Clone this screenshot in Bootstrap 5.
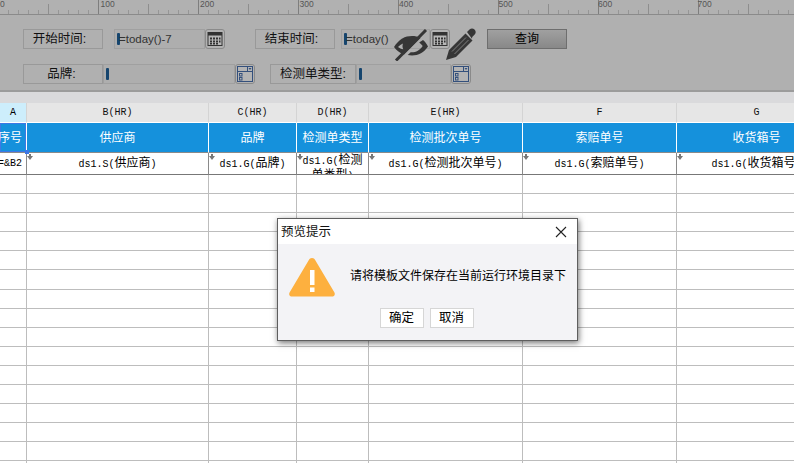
<!DOCTYPE html>
<html lang="zh-CN">
<head>
<meta charset="utf-8">
<title>预览提示</title>
<link rel="stylesheet" href="https://cdn.jsdelivr.net/npm/bootstrap@5.3.0/dist/css/bootstrap.min.css">
<style>
html,body{height:100%;overflow:hidden;background:#fff}
body{font-family:"Liberation Sans","Noto Sans CJK SC",sans-serif;font-size:12px;color:#000}
.stage{width:794px;height:463px;overflow:hidden;position:relative}
.ruler{height:15px;background-color:#b1b1b1;border-bottom:1px solid #8a8a8a;font-size:8.5px;color:#555;line-height:8px;
background-image:linear-gradient(90deg,#7e7e7e 1px,transparent 1px),linear-gradient(90deg,#8e8e8e 1px,transparent 1px),linear-gradient(90deg,#969696 1px,transparent 1px);
background-size:100px 14px,100px 10px,10px 4px;background-repeat:repeat-x;background-position:-2px 0,48px 4px,8px 10px}
.rtick{width:100px;padding-left:3px}
.rtick-first{width:98px;padding-left:0}
.toolpane{height:77px;background:#b0b0b0;border-bottom:2px solid #9c9c9c;padding:14px 0 0 23px}
.tool-row{height:20px;margin-bottom:15px}
.flabel{height:20px;border:1px solid #999;background:#b0b0b0;font-size:12.5px;color:#111;width:80px;line-height:19px;text-align:center}
.lbl-shift{padding-right:7px}
.lbl-shift-sm{padding-right:3px}
.fbox{height:20px;border:1px solid #a0a0a0;background:#aeaeae;color:#333;font-size:11.5px;line-height:18px;padding-left:2px;white-space:nowrap}
.caret-mark{display:inline-block;width:3px;height:12px;background:#16456e;border-radius:1px;vertical-align:-2px;margin-right:-1px}
.pick{width:20px;height:20px;border:1px solid #8a8a8a;border-radius:3px;background:#b2b2b2;flex:none;padding:1px}
.pick svg{display:block}
.w-start{width:91px;margin-left:11px}
.w-end{width:89px;margin-left:6px}
.w-brand{width:132px}
.w-type{width:95px}
.gap-end{margin-left:30px}
.gap-type{margin-left:15px;width:86px}
.query{width:80px;height:20px;border:1px solid #6e6e6e;border-radius:0;background:linear-gradient(#a0a0a0,#888);font-size:12px;padding:0;line-height:18px;margin-left:37px;color:#000}
.eye{position:absolute;left:393px;top:29px}
.pencil{position:absolute;left:445px;top:28px}
.band{height:11px;background:#dadadc}
.sheet{width:837px;table-layout:fixed;border-collapse:separate;border-spacing:0;margin:0;font-family:"Liberation Mono","Noto Sans CJK SC",monospace}
.sheet td,.sheet th{padding:0;border-right:1px solid #bdbdbd;border-bottom:1px solid #bdbdbd;background:#fff;box-shadow:none;height:19.1px;font-weight:400;text-align:center;color:#000;overflow:hidden;white-space:nowrap;position:relative;vertical-align:middle}
.sheet .head th{background:#e6e6e6;height:20px;font-size:10px;line-height:19px;border-right:1px solid #d4d4d4;border-bottom:1px solid #fff;color:#111}
.sheet .head .on{background:#cdeefc;color:#000}
.sheet .title th{background:#1591dc;height:30px;color:#fff;font-family:"Liberation Sans","Noto Sans CJK SC",sans-serif;font-size:12px;border-right:1px solid #fff;border-bottom:1px solid #8a8a8a}
.sheet .title .seq{box-shadow:inset 0 0 0 1px #3c78e6;padding-right:4px}
.clip-r{display:block;width:40px;margin-left:-18px;text-align:right}
.sheet .data td{height:22px;font-size:12px;line-height:14px;border-right:1px solid #8a8a8a;border-bottom:1px solid #777;padding-top:1px}
.lat{font-size:10px}
.sheet .data .wrapbox{padding-top:0;vertical-align:top}
.wrapcell{display:block;height:21px;overflow:hidden;white-space:normal;line-height:14px;padding-top:1px}
.mk{position:absolute;left:0;top:1px;display:block}
.handle{position:absolute;left:25px;top:150px;width:4px;height:4px;background:#3c78e6}
.dialog-box{position:absolute;left:277px;top:218px;width:301px;height:123px;background:#f3f3f6;border:1px solid #5e5e5e;box-shadow:1px 2px 6px rgba(0,0,0,.55);z-index:5}
.dlg-head{height:25px;background:#fff;font-size:12.5px;line-height:24px;padding-left:3px;color:#111}
.dlg-msg{font-size:12px;padding-left:10px;height:53px}
.warn{margin-top:11px;flex:none}
.dlg-text{margin-left:14px;margin-top:23px;line-height:18px;white-space:nowrap}
.dlg-btn{width:44px;height:20px;padding:0;border:1px solid #d6d6d6;border-radius:0;background:#fff;font-size:12.5px;line-height:18px;color:#000}
.dlg-foot{gap:6px;margin-top:11px;padding-right:2px}
.dlg-x{width:12px;height:12px;margin-right:10px;border:0;background:none;padding:0}
.dlg-x svg{display:block}
.c-a{width:27px}.c-b{width:182px}.c-c{width:88px}.c-d{width:72px}.c-e{width:154px}.c-f{width:154px}.c-g{width:160px}
</style>
</head>
<body>
<div class="stage">
  <div class="ruler d-flex">
    <span class="rtick rtick-first">0</span><span class="rtick">100</span><span class="rtick">200</span><span class="rtick">300</span><span class="rtick">400</span><span class="rtick">500</span><span class="rtick">600</span><span class="rtick">700</span>
  </div>
  <div class="toolpane">
    <div class="tool-row d-flex align-items-center">
      <div class="flabel lbl-shift">开始时间:</div>
      <div class="fbox w-start"><span class="caret-mark"></span>=today()-7</div>
      <div class="pick"><svg width="16" height="16" viewBox="0 0 16 16"><rect x="1" y="1.5" width="14" height="13" fill="#b8b8b8" stroke="#333"/><rect x="1" y="1.5" width="14" height="3" fill="#333"/><g fill="#333"><rect x="3" y="6.5" width="2" height="2"/><rect x="6" y="6.5" width="2" height="2"/><rect x="9" y="6.5" width="2" height="2"/><rect x="12" y="6.5" width="1.5" height="2"/><rect x="3" y="9.5" width="2" height="2"/><rect x="6" y="9.5" width="2" height="2"/><rect x="9" y="9.5" width="2" height="2"/><rect x="12" y="9.5" width="1.5" height="2"/><rect x="3" y="12" width="2" height="1.5"/><rect x="6" y="12" width="2" height="1.5"/><rect x="9" y="12" width="2" height="1.5"/></g></svg></div>
      <div class="flabel gap-end lbl-shift">结束时间:</div>
      <div class="fbox w-end"><span class="caret-mark"></span>=today()</div>
      <div class="pick"><svg width="16" height="16" viewBox="0 0 16 16"><rect x="1" y="1.5" width="14" height="13" fill="#b8b8b8" stroke="#333"/><rect x="1" y="1.5" width="14" height="3" fill="#333"/><g fill="#333"><rect x="3" y="6.5" width="2" height="2"/><rect x="6" y="6.5" width="2" height="2"/><rect x="9" y="6.5" width="2" height="2"/><rect x="12" y="6.5" width="1.5" height="2"/><rect x="3" y="9.5" width="2" height="2"/><rect x="6" y="9.5" width="2" height="2"/><rect x="9" y="9.5" width="2" height="2"/><rect x="12" y="9.5" width="1.5" height="2"/><rect x="3" y="12" width="2" height="1.5"/><rect x="6" y="12" width="2" height="1.5"/><rect x="9" y="12" width="2" height="1.5"/></g></svg></div>
      <button type="button" class="btn query">查询</button>
    </div>
    <div class="tool-row d-flex align-items-center">
      <div class="flabel lbl-shift-sm">品牌:</div>
      <div class="fbox w-brand"><span class="caret-mark"></span></div>
      <div class="pick"><svg width="16" height="16" viewBox="0 0 16 16"><rect x="0.5" y="0.5" width="15" height="15" fill="#b4b4b4" stroke="#34507c"/><path d="M.5 5.5h15M10.5.5v5" stroke="#34507c"/><path d="M11.5 2h3l-1.5 2z" fill="#34507c"/><rect x="2.5" y="7.5" width="2.5" height="2.5" fill="none" stroke="#34507c"/><rect x="2.5" y="11.500" width="2.5" height="2.5" fill="none" stroke="#34507c"/></svg></div>
      <div class="flabel gap-type">检测单类型:</div>
      <div class="fbox w-type"><span class="caret-mark"></span></div>
      <div class="pick"><svg width="16" height="16" viewBox="0 0 16 16"><rect x="0.5" y="0.5" width="15" height="15" fill="#b4b4b4" stroke="#34507c"/><path d="M.5 5.5h15M10.5.5v5" stroke="#34507c"/><path d="M11.5 2h3l-1.5 2z" fill="#34507c"/><rect x="2.5" y="7.5" width="2.5" height="2.5" fill="none" stroke="#34507c"/><rect x="2.5" y="11.500" width="2.5" height="2.5" fill="none" stroke="#34507c"/></svg></div>
    </div>
  </div>
  <svg class="eye" width="36" height="32" viewBox="0 0 36 32"><path d="M1 18C6 10 12 7 19 7c3 0 6 .6 8.500 2L11 25.500C7 24 3.500 21.500 1 18z" fill="#363636"/><path d="M30 11c2 1.500 3.500 3.500 5 6.500-4 6-9.500 9-16 9-1.500 0-3-.2-4.300-.5l3-2.800c4.500.4 9-1.500 12-6.200-1.200-1.600-2.400-2.700-3.500-3.600z" fill="#363636"/><path d="M3 31.500L33 1" stroke="#363636" stroke-width="3" fill="none"/><path d="M5 18c1.500-1.500 3-2.700 5-3.500-.8 2-.6 4 .3 5.800-2-.4-3.800-1-5.300-2.300z" fill="#b0b0b0"/></svg>
  <svg class="pencil" width="32" height="33" viewBox="0 0 32 33"><path d="M1 32l3-10L20.500 5.500l7 7L11 29z" fill="#363636"/><path d="M22 4l2.500-2.500c1.500-1.500 3.500-1.500 5 0s1.700 3.500.2 5L27.200 9l-.2 1.800z" fill="#363636"/><path d="M7 23.500L21 9.500M9.500 26L23.500 12" stroke="#b0b0b0" stroke-width="1" opacity=".6"/></svg>
  <div class="band"></div>
  <table class="table sheet">
    <colgroup><col class="c-a"><col class="c-b"><col class="c-c"><col class="c-d"><col class="c-e"><col class="c-f"><col class="c-g"></colgroup>
    <tbody>
    <tr class="head"><th class="on">A</th><th>B(HR)</th><th>C(HR)</th><th>D(HR)</th><th>E(HR)</th><th>F</th><th>G</th></tr>
    <tr class="title"><th class="seq"><span class="clip-r">序号</span></th><th>供应商</th><th>品牌</th><th>检测单类型</th><th>检测批次单号</th><th>索赔单号</th><th>收货箱号</th></tr>
    <tr class="data">
      <td><span class="clip-r lat">=&amp;B2</span></td>
      <td><svg class="mk" width="6" height="6"><path d="M2 0h2v2h2L3 6 0 2h2z" fill="#777"/></svg><span class="lat">ds1.S(</span>供应商<span class="lat">)</span></td>
      <td><svg class="mk" width="6" height="6"><path d="M2 0h2v2h2L3 6 0 2h2z" fill="#777"/></svg><span class="lat">ds1.G(</span>品牌<span class="lat">)</span></td>
      <td class="wrapbox"><svg class="mk" width="6" height="6"><path d="M2 0h2v2h2L3 6 0 2h2z" fill="#777"/></svg><span class="wrapcell"><span class="lat">ds1.G(</span>检测单类型<span class="lat">)</span></span></td>
      <td><svg class="mk" width="6" height="6"><path d="M2 0h2v2h2L3 6 0 2h2z" fill="#777"/></svg><span class="lat">ds1.G(</span>检测批次单号<span class="lat">)</span></td>
      <td><svg class="mk" width="6" height="6"><path d="M2 0h2v2h2L3 6 0 2h2z" fill="#777"/></svg><span class="lat">ds1.G(</span>索赔单号<span class="lat">)</span></td>
      <td><svg class="mk" width="6" height="6"><path d="M2 0h2v2h2L3 6 0 2h2z" fill="#777"/></svg><span class="lat">ds1.G(</span>收货箱号<span class="lat">)</span></td>
    </tr>
    <tr><td></td><td></td><td></td><td></td><td></td><td></td><td></td></tr>
    <tr><td></td><td></td><td></td><td></td><td></td><td></td><td></td></tr>
    <tr><td></td><td></td><td></td><td></td><td></td><td></td><td></td></tr>
    <tr><td></td><td></td><td></td><td></td><td></td><td></td><td></td></tr>
    <tr><td></td><td></td><td></td><td></td><td></td><td></td><td></td></tr>
    <tr><td></td><td></td><td></td><td></td><td></td><td></td><td></td></tr>
    <tr><td></td><td></td><td></td><td></td><td></td><td></td><td></td></tr>
    <tr><td></td><td></td><td></td><td></td><td></td><td></td><td></td></tr>
    <tr><td></td><td></td><td></td><td></td><td></td><td></td><td></td></tr>
    <tr><td></td><td></td><td></td><td></td><td></td><td></td><td></td></tr>
    <tr><td></td><td></td><td></td><td></td><td></td><td></td><td></td></tr>
    <tr><td></td><td></td><td></td><td></td><td></td><td></td><td></td></tr>
    <tr><td></td><td></td><td></td><td></td><td></td><td></td><td></td></tr>
    <tr><td></td><td></td><td></td><td></td><td></td><td></td><td></td></tr>
    <tr><td></td><td></td><td></td><td></td><td></td><td></td><td></td></tr>
    <tr><td></td><td></td><td></td><td></td><td></td><td></td><td></td></tr>
    </tbody>
  </table>
  <div class="handle"></div>
  <div class="dialog-box">
    <div class="dlg-head d-flex justify-content-between align-items-center">
      <span>预览提示</span>
      <button type="button" class="dlg-x" aria-label="关闭"><svg width="12" height="12" viewBox="0 0 12 12"><path d="M1 1l10 10M11 1L1 11" stroke="#222" stroke-width="1.1"/></svg></button>
    </div>
    <div class="dlg-msg d-flex align-items-start">
      <svg class="warn" width="48" height="44" viewBox="0 0 48 44"><path d="M24 3c1.500 0 2.500 .8 3.300 2.200l19 32c1.200 2.200 .2 4.300-2.400 4.300H4.100c-2.600 0-3.600-2.100-2.400-4.300l19-32C21.500 3.800 22.500 3 24 3z" fill="#fdb03f"/><rect x="22" y="15" width="4.500" height="15" fill="#fff"/><rect x="22" y="32.500" width="4.500" height="4.500" fill="#fff"/></svg>
      <div class="dlg-text">请将模板文件保存在当前运行环境目录下</div>
    </div>
    <div class="dlg-foot d-flex justify-content-center">
      <button type="button" class="btn dlg-btn">确定</button>
      <button type="button" class="btn dlg-btn">取消</button>
    </div>
  </div>
</div>
<script src="https://cdn.jsdelivr.net/npm/bootstrap@5.3.0/dist/js/bootstrap.bundle.min.js"></script>
</body>
</html>
